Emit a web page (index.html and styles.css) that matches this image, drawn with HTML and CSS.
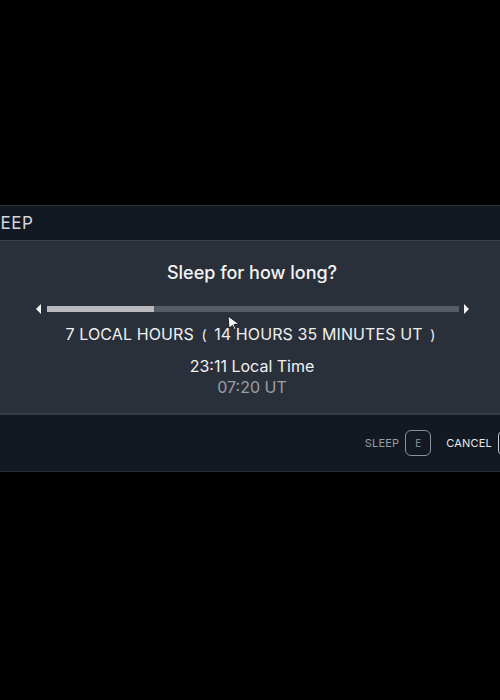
FILE: index.html
```html
<!doctype html>
<html lang="en">
<head>
    <meta charset="UTF-8"/>
    <meta name="viewport" content="width=device-width, initial-scale=1.0"/>
    <title>Sleep</title>
    <link rel="stylesheet" href="styles.css">
</head>
<body>
<div class="screen">
    <div class="panel">
        <div class="panel-header">SLEEP</div>

        <div class="panel-body">
            <h2 class="question">Sleep for how long?</h2>

            <div class="slider">
                <span class="arrow arrow-left"></span>
                <div class="track">
                    <div class="fill" style="width: 26%"></div>
                </div>
                <span class="arrow arrow-right"></span>
            </div>

            <div class="duration">7 LOCAL HOURS <span class="paren">(</span> 14 HOURS 35 MINUTES UT <span class="paren">)</span></div>

            <div class="local-time">23:11 Local Time</div>
            <div class="ut-time">07:20 UT</div>

            <svg class="cursor" width="14" height="16" viewBox="0 0 14 16">
                <path d="M1 1 L12 9 L7 9.5 L9 14 L7.5 15 L5.5 10.5 L2 13 Z" fill="#f4f4f4" stroke="#1a1d22" stroke-width="1"/>
            </svg>
        </div>

        <div class="panel-footer">
            <div class="action action-dim">
                <span>SLEEP</span>
                <span class="key">E</span>
            </div>
            <div class="action">
                <span>CANCEL</span>
                <span class="key">Q</span>
            </div>
        </div>
    </div>
</div>
</body>
</html>
```

FILE: styles.css
```css
html, body {
    margin: 0;
    padding: 0;
    background: #000;
    overflow: hidden;
}

body {
    font-family: Inter, "Open Sans", sans-serif;
    color: #eceef0;
    width: 500px;
    height: 700px;
}

.screen {
    padding-top: 205px;
}

.panel {
    width: 600px;
    margin-left: -48px;
    border-top: 1px solid #2b3039;
    border-bottom: 1px solid #2a2e34;
}

.panel-header {
    background: #131922;
    height: 34px;
    line-height: 34px;
    padding-left: 27px;
    font-size: 17px;
    letter-spacing: 0.5px;
    color: #d4d7db;
    border-bottom: 1px solid #3a404a;
}

.panel-body {
    position: relative;
    background: #2a3039;
    height: 172px;
    text-align: center;
    border-bottom: 2px solid #353b45;
}

.question {
    margin: 0;
    padding-top: 21px;
    font-size: 18px;
    font-weight: 500;
    line-height: 22px;
    color: #f2f3f5;
}

.slider {
    display: flex;
    align-items: center;
    justify-content: center;
    margin-top: 20px;
    height: 10px;
}

.arrow {
    width: 0;
    height: 0;
    border-top: 5px solid transparent;
    border-bottom: 5px solid transparent;
}

.arrow-left {
    border-right: 5px solid #f2f2f2;
    margin-right: 6px;
}

.arrow-right {
    border-left: 5px solid #f2f2f2;
    margin-left: 5px;
}

.track {
    width: 412px;
    height: 6px;
    background: #565c66;
}

.fill {
    height: 100%;
    background: #b8babd;
}

.duration {
    margin-top: 10px;
    font-size: 16px;
    line-height: 20px;
    letter-spacing: 0.1px;
    color: #eef0f2;
}

.paren {
    font-size: 14px;
    margin: 0 3px;
}

.local-time {
    margin-top: 11px;
    font-size: 16px;
    line-height: 20px;
    font-weight: 400;
    color: #f0f1f3;
}

.ut-time {
    font-size: 16px;
    line-height: 22px;
    color: #9b9fa5;
}

.cursor {
    position: absolute;
    left: 275px;
    top: 74px;
}

.panel-footer {
    background: #131922;
    height: 56px;
    display: flex;
    align-items: center;
    justify-content: flex-end;
    gap: 15px;
    padding-right: 28px;
}

.action {
    display: flex;
    align-items: center;
    gap: 6px;
    font-size: 11px;
    letter-spacing: 0.2px;
    color: #e8eaec;
}

.action-dim {
    color: #9a9ea4;
}

.key {
    width: 24px;
    height: 24px;
    border: 1px solid #8d9299;
    border-radius: 6px;
    display: flex;
    align-items: center;
    justify-content: center;
    font-size: 10px;
    color: #8d9299;
}

.action:not(.action-dim) .key {
    border-color: #c8ccd0;
    color: #c8ccd0;
}
```
